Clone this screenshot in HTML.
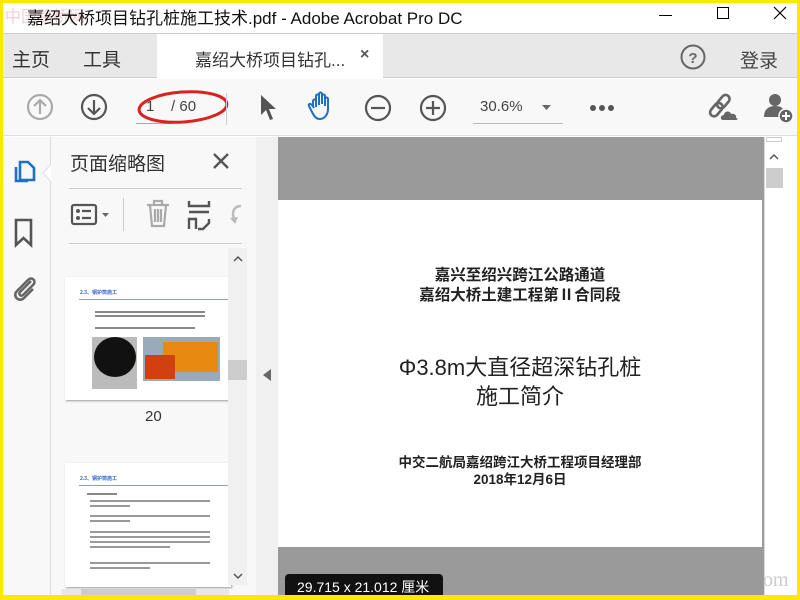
<!DOCTYPE html>
<html><head><meta charset="utf-8"><style>
*{margin:0;padding:0;box-sizing:border-box}
body{width:800px;height:600px;overflow:hidden;background:#ffe800;font-family:"Liberation Sans","Noto Sans CJK SC",sans-serif;position:relative}
.a{position:absolute}
.cn{font-family:"Liberation Sans","Noto Sans CJK SC",sans-serif}
svg{position:absolute;overflow:visible}
</style></head><body>
<div class="a" style="left:3px;top:3px;width:794px;height:592px;background:#fff;overflow:hidden">
 <div class="a" style="left:0;top:0;width:794px;height:30px;background:#fff"></div>
 <div class="a cn" style="left:2px;top:0;font-size:16px;color:#f0d0d0">中国路桥网</div>
 <div class="a cn" style="left:24px;top:1px;font-size:17px;color:#111">嘉绍大桥项目钻孔桩施工技术.pdf - Adobe Acrobat Pro DC</div>
 <div class="a" style="left:656px;top:12px;width:13px;height:1px;background:#000"></div>
 <div class="a" style="left:714px;top:4px;width:12px;height:12px;border:1px solid #000"></div>
 <svg style="left:771px;top:4px" width="12" height="12"><path d="M0 0L12 12M12 0L0 12" stroke="#000" stroke-width="1.2"/></svg>
 <div class="a" style="left:0;top:30px;width:794px;height:45px;background:#e8e8e8;border-top:1px solid #ccc;border-bottom:1px solid #ccc"></div>
 <div class="a" style="left:154px;top:31px;width:226px;height:45px;background:#fff"></div>
 <div class="a cn" style="left:9px;top:42px;font-size:19px;color:#333">主页</div>
 <div class="a cn" style="left:80px;top:42px;font-size:19px;color:#333">工具</div>
 <div class="a cn" style="left:192px;top:43px;font-size:17px;color:#333">嘉绍大桥项目钻孔...</div>
 <div class="a" style="left:357px;top:43px;font-size:16px;color:#555;font-weight:bold">×</div>
 <svg style="left:677px;top:41px" width="26" height="26"><circle cx="13" cy="13" r="11.5" fill="none" stroke="#666" stroke-width="2"/><text x="13" y="19" font-size="15" font-weight="bold" text-anchor="middle" fill="#666" font-family="Liberation Sans">?</text></svg>
 <div class="a cn" style="left:737px;top:43px;font-size:19px;color:#444">登录</div>
 <div class="a" style="left:0;top:76px;width:794px;height:57px;background:#f8f8f8;border-bottom:1px solid #ddd"></div>
 <svg style="left:23px;top:90px" width="28" height="28"><circle cx="14" cy="14" r="12" fill="none" stroke="#aaa" stroke-width="2.2"/><path d="M14 21V8M8 13l6-6 6 6" fill="none" stroke="#aaa" stroke-width="2.2"/></svg>
 <svg style="left:77px;top:90px" width="28" height="28"><circle cx="14" cy="14" r="12" fill="none" stroke="#555" stroke-width="2.2"/><path d="M14 7v13M8 15l6 6 6-6" fill="none" stroke="#555" stroke-width="2.2"/></svg>
 <div class="a" style="left:133px;top:120px;width:36px;height:1px;background:#aaa"></div>
 <div class="a" style="left:143px;top:95px;font-size:15px;color:#444">1&nbsp;&nbsp;&nbsp;&nbsp;/ 60</div>
 <svg style="left:134px;top:86px" width="92" height="38"><ellipse cx="46" cy="18" rx="44" ry="15" fill="none" stroke="#d9231f" stroke-width="3" transform="rotate(-4 46 18)"/></svg>
 <div class="a" style="left:223px;top:90px;width:1px;height:32px;background:#ccc"></div>
 <svg style="left:256px;top:91px" width="20" height="28"><path d="M2 1L2 21L7 16L11 26L14 25L10 15L17 15Z" fill="#555"/></svg>
 <svg style="left:305px;top:88px" width="30" height="32"><path d="M5 16V10c0-2 3-2 3 0v6M8 14V5c0-2 3-2 3 0v9M11 13V3c0-2 3-2 3 0v10M14 13V5c0-2 3-2 3 0v10M17 15V8c0-2 3-2 3 0v10c0 6-4 10-8 10c-4 0-6-3-8-7l-3-6c-1-2 1-3 3-1l2 3" fill="none" stroke="#1e6fc6" stroke-width="2"/></svg>
 <svg style="left:361px;top:91px" width="28" height="28"><circle cx="14" cy="14" r="12" fill="none" stroke="#555" stroke-width="2.2"/><path d="M7 14h14" stroke="#555" stroke-width="2.2"/></svg>
 <svg style="left:416px;top:91px" width="28" height="28"><circle cx="14" cy="14" r="12" fill="none" stroke="#555" stroke-width="2.2"/><path d="M7 14h14M14 7v14" stroke="#555" stroke-width="2.2"/></svg>
 <div class="a" style="left:477px;top:95px;font-size:15px;color:#444">30.6%</div>
 <svg style="left:539px;top:102px" width="10" height="6"><path d="M0 0h9L4.5 5z" fill="#666"/></svg>
 <div class="a" style="left:470px;top:120px;width:90px;height:1px;background:#bbb"></div>
 <svg style="left:586px;top:101px" width="26" height="8"><circle cx="4" cy="4" r="3" fill="#555"/><circle cx="13" cy="4" r="3" fill="#555"/><circle cx="22" cy="4" r="3" fill="#555"/></svg>
 <svg style="left:706px;top:89px" width="34" height="32"><g fill="none" stroke="#666" stroke-width="2.6"><rect x="10" y="2" width="8" height="15" rx="4" transform="rotate(40 14 10)"/><rect x="3" y="10" width="8" height="15" rx="4" transform="rotate(40 7 18)"/></g><path d="M14 28c-3 0-3-5 1-5c0-4 6-5 7-1c3-1 6 1 5 4c2 0 2 2 0 2z" fill="#666"/></svg>
 <svg style="left:760px;top:88px" width="32" height="34"><circle cx="12" cy="9" r="6" fill="#666"/><path d="M1 26c0-8 5-11 11-11s8 2 9 5v6z" fill="#666"/><circle cx="23" cy="25" r="7" fill="#666" stroke="#f8f8f8" stroke-width="1.5"/><path d="M23 21v8M19 25h8" stroke="#fff" stroke-width="2"/></svg>
 <div class="a" style="left:0;top:134px;width:48px;height:460px;background:#f8f8f8;border-right:1px solid #ddd"></div>
 <svg style="left:9px;top:155px" width="26" height="28"><path d="M8 4h8l6 6v12H8z" fill="none" stroke="#1e6fc6" stroke-width="2.6"/><path d="M4 9v14h12" fill="none" stroke="#1e6fc6" stroke-width="2.6"/></svg>
 <svg style="left:39px;top:160px" width="10" height="20"><path d="M10 0L1 10L10 20" fill="#fff" stroke="#ddd"/></svg>
 <svg style="left:11px;top:215px" width="20" height="30"><path d="M2 2h15v25l-7.5-7-7.5 7z" fill="none" stroke="#555" stroke-width="2.6"/></svg>
 <svg style="left:8px;top:270px" width="28" height="30"><path d="M20 8L9 19c-2 2 1 5 3 3l10-10c4-4-1-9-5-5L6 18c-5 5 2 12 7 7l9-9" fill="none" stroke="#666" stroke-width="2.6"/></svg>
 <div class="a" style="left:48px;top:134px;width:207px;height:460px;background:#f8f8f8;border-right:1px solid #ddd"></div>
 <div class="a cn" style="left:67px;top:146px;font-size:19px;color:#333">页面缩略图</div>
 <svg style="left:210px;top:150px" width="16" height="16"><path d="M1 1L15 15M15 1L1 15" stroke="#555" stroke-width="2.4"/></svg>
 <div class="a" style="left:66px;top:185px;width:173px;height:1px;background:#ccc"></div>
 <div class="a" style="left:66px;top:240px;width:173px;height:1px;background:#ccc"></div>
 <svg style="left:68px;top:200px" width="40" height="24"><rect x="1" y="2" width="24" height="19" rx="2" fill="none" stroke="#555" stroke-width="2.2"/><circle cx="7" cy="8" r="2" fill="#555"/><circle cx="7" cy="15" r="2" fill="#555"/><path d="M11 8h9M11 15h9" stroke="#555" stroke-width="2.2"/><path d="M31 10h7l-3.5 4z" fill="#666"/></svg>
 <div class="a" style="left:120px;top:195px;width:1px;height:33px;background:#ccc"></div>
 <svg style="left:142px;top:196px" width="28" height="30"><g fill="none" stroke="#aaa" stroke-width="2.2"><path d="M2 6h22M9 6V2h8v4M5 6l2 21h12l2-21M10 10v13M13 10v13M16 10v13"/></g></svg>
 <svg style="left:184px;top:197px" width="26" height="30"><g fill="none" stroke="#555" stroke-width="2.4"><path d="M2 1v5h20V1M2 12h20M2 29v-10h7v10M22 19v4l-6 6h-5"/></g></svg>
 <svg style="left:226px;top:200px" width="14" height="26"><path d="M12 3c-8 0-10 8-6 14" fill="none" stroke="#bbb" stroke-width="2.4"/><path d="M1 15l5 6 3-7" fill="#bbb"/></svg>
 <div class="a" style="left:62px;top:274px;width:166px;height:123px;background:#fff;box-shadow:1px 1px 2px #999;overflow:hidden">
  <div class="a" style="left:15px;top:12px;font-size:5px;color:#36c;font-weight:bold">2.3、钢护筒施工</div>
  <div class="a" style="left:14px;top:22px;width:150px;height:1px;background:#c89"></div>
  <div class="a" style="left:30px;top:34px;width:110px;height:2px;background:#888"></div>
  <div class="a" style="left:30px;top:38px;width:110px;height:2px;background:#888"></div>
  <div class="a" style="left:30px;top:50px;width:100px;height:2px;background:#888"></div>
  <div class="a" style="left:27px;top:60px;width:45px;height:52px;background:#bbb"><div class="a" style="left:2px;top:0;width:42px;height:40px;border-radius:50%;background:#111"></div></div>
  <div class="a" style="left:78px;top:60px;width:77px;height:44px;background:#9ab"><div class="a" style="left:20px;top:5px;width:55px;height:30px;background:#e88a10"></div><div class="a" style="left:2px;top:18px;width:30px;height:24px;background:#d04010"></div></div>
 </div>
 <div class="a" style="left:142px;top:405px;font-size:15px;color:#333">20</div>
 <div class="a" style="left:62px;top:460px;width:166px;height:124px;background:#fff;box-shadow:1px 1px 2px #999;overflow:hidden">
  <div class="a" style="left:15px;top:12px;font-size:5px;color:#36c;font-weight:bold">2.3、钢护筒施工</div>
  <div class="a" style="left:14px;top:22px;width:150px;height:1px;background:#c89"></div>
  <div class="a" style="left:22px;top:30px;width:30px;height:2px;background:#888"></div>
  <div class="a" style="left:25px;top:37px;width:120px;height:2px;background:#999"></div>
  <div class="a" style="left:25px;top:42px;width:40px;height:2px;background:#999"></div>
  <div class="a" style="left:25px;top:52px;width:120px;height:2px;background:#999"></div>
  <div class="a" style="left:25px;top:57px;width:40px;height:2px;background:#999"></div>
  <div class="a" style="left:25px;top:68px;width:120px;height:2px;background:#999"></div>
  <div class="a" style="left:25px;top:73px;width:120px;height:2px;background:#999"></div>
  <div class="a" style="left:25px;top:78px;width:120px;height:2px;background:#999"></div>
  <div class="a" style="left:25px;top:83px;width:80px;height:2px;background:#999"></div>
  <div class="a" style="left:25px;top:99px;width:120px;height:2px;background:#999"></div>
  <div class="a" style="left:25px;top:104px;width:60px;height:2px;background:#999"></div>
 </div>
 <div class="a" style="left:225px;top:245px;width:19px;height:337px;background:#f0f0f0"></div>
 <div class="a" style="left:225px;top:357px;width:19px;height:20px;background:#cdcdcd"></div>
 <svg style="left:230px;top:253px" width="10" height="6"><path d="M1 5l4-4 4 4" fill="none" stroke="#555" stroke-width="1.5"/></svg>
 <svg style="left:230px;top:570px" width="10" height="6"><path d="M1 1l4 4 4-4" fill="none" stroke="#555" stroke-width="1.5"/></svg>
 <div class="a" style="left:58px;top:586px;width:168px;height:8px;background:#e8e8e8"></div>
 <div class="a" style="left:78px;top:586px;width:115px;height:8px;background:#cdcdcd"></div>
 <div class="a" style="left:253px;top:134px;width:22px;height:460px;background:#f0f0f0"></div>
 <svg style="left:260px;top:366px" width="8" height="12"><path d="M8 0v12L0 6z" fill="#666"/></svg>
 <div class="a" style="left:275px;top:134px;width:486px;height:460px;background:#9a9a9a"></div>
 <div class="a" style="left:275px;top:197px;width:484px;height:347px;background:#fff"></div>
 <div class="a cn" style="left:275px;top:263px;width:484px;text-align:center;font-size:15.5px;line-height:20px;color:#222;font-weight:bold">嘉兴至绍兴跨江公路通道<br>嘉绍大桥土建工程第Ⅱ合同段</div>
 <div class="a cn" style="left:275px;top:350px;width:484px;text-align:center;font-size:22px;line-height:29px;color:#222">Φ3.8m大直径超深钻孔桩<br>施工简介</div>
 <div class="a cn" style="left:275px;top:451px;width:484px;text-align:center;font-size:13.5px;line-height:17px;color:#222;font-weight:bold">中交二航局嘉绍跨江大桥工程项目经理部<br>2018年12月6日</div>
 <div class="a" style="left:282px;top:571px;width:158px;height:26px;background:#111;border-radius:4px"></div>
 <div class="a cn" style="left:294px;top:574px;font-size:14px;color:#fff">29.715 x 21.012 厘米</div>
 <div class="a" style="left:761px;top:134px;width:20px;height:460px;background:#fff;border-left:1px solid #ddd"></div>
 <div class="a" style="left:763px;top:134px;width:16px;height:5px;border:1px solid #ccc;background:#fff"></div>
 <svg style="left:766px;top:151px" width="10" height="6"><path d="M1 5l4-4 4 4" fill="none" stroke="#555" stroke-width="1.5"/></svg>
 <div class="a" style="left:763px;top:165px;width:17px;height:20px;background:#cdcdcd"></div>
 <div class="a" style="left:781px;top:134px;width:13px;height:460px;background:#fff"></div>
 <div class="a" style="left:760px;top:566px;font-size:20px;color:#ccc;font-family:'Liberation Serif',serif">om</div>
</div>
</body></html>
